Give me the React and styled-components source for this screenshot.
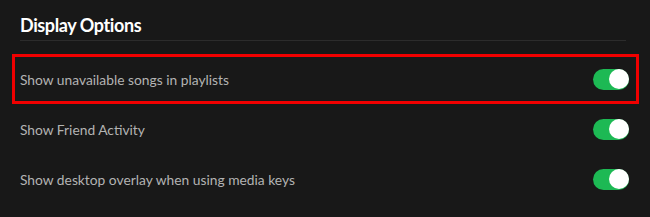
import React from 'react';
import styled, { createGlobalStyle } from 'styled-components';

const GlobalStyle = createGlobalStyle`
  html, body {
    margin: 0;
    padding: 0;
    background: #181818;
  }
`;

const Screen = styled.div`
  width: 650px;
  height: 217px;
  box-sizing: border-box;
  padding: 14px 21px 0 20px;
  background: #181818;
  font-family: Lato, "Open Sans", sans-serif;
  overflow: hidden;
`;

const Title = styled.h2`
  margin: 0;
  padding-bottom: 4px;
  font-size: 18px;
  font-weight: 700;
  letter-spacing: -0.4px;
  line-height: 22px;
  color: #ffffff;
  border-bottom: 1px solid #2c2c2c;
  margin-right: 3px;
`;

const List = styled.div`
  display: flex;
  flex-direction: column;
  margin-top: 13px;
`;

const Row = styled.div`
  display: flex;
  align-items: center;
  justify-content: space-between;
  height: 50px;
  margin: 0 -10px 0 -8px;
  padding: 0 10px 0 8px;
  box-shadow: ${props => props.highlighted ? 'inset 0 0 0 3px #f00000' : 'none'};
`;

const Label = styled.span`
  font-size: 13.8px;
  color: #b3b3b3;
`;

// switch in the "on" state
const Toggle = styled.div`
  width: 36px;
  height: 21px;
  border-radius: 11px;
  background: ${props => props.on ? '#1db954' : '#535353'};
  display: flex;
  align-items: center;
  justify-content: ${props => props.on ? 'flex-end' : 'flex-start'};
  padding: 0 0.5px;
  box-sizing: border-box;
`;

const Knob = styled.span`
  width: 20px;
  height: 20px;
  border-radius: 50%;
  background: #ffffff;
`;

const options = [
  { label: 'Show unavailable songs in playlists', highlighted: true },
  { label: 'Show Friend Activity' },
  { label: 'Show desktop overlay when using media keys' },
];

const App = () => (
  <>
    <GlobalStyle />
    <Screen>
      <Title>Display Options</Title>
      <List>
        {options.map(o => (
          <Row key={o.label} highlighted={o.highlighted}>
            <Label>{o.label}</Label>
            <Toggle on>
              <Knob />
            </Toggle>
          </Row>
        ))}
      </List>
    </Screen>
  </>
);

export default App;
